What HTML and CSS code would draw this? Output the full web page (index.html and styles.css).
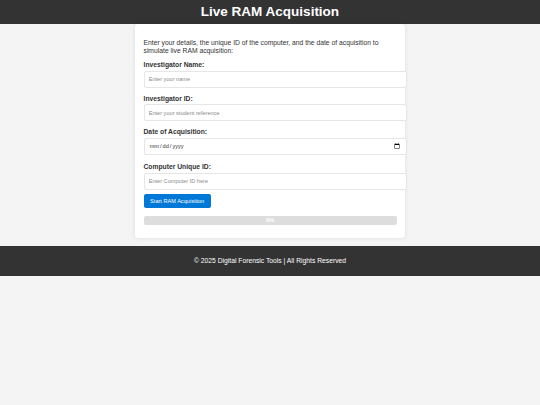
FILE: index.html
```html
<!DOCTYPE html>
<html lang="en">
<head>
<meta charset="utf-8">
<title>Live RAM Acquisition</title>
<link rel="stylesheet" href="styles.css">
</head>
<body>
<header class="site-header">
  <h1 class="site-title">Live RAM Acquisition</h1>
</header>
<main class="container">
  <p class="intro">Enter your details, the unique ID of the computer, and the date of acquisition to simulate live RAM acquisition:</p>
  <form class="form">
    <label class="field-label" for="name">Investigator Name:</label>
    <input class="field-input" type="text" id="name" placeholder="Enter your name">
    <label class="field-label" for="sid">Investigator ID:</label>
    <input class="field-input" type="text" id="sid" placeholder="Enter your student reference">
    <label class="field-label" for="date">Date of Acquisition:</label>
    <input class="field-input field-date" type="date" id="date">
    <label class="field-label" for="cid">Computer Unique ID:</label>
    <input class="field-input" type="text" id="cid" placeholder="Enter Computer ID here">
    <button class="start-btn" type="button">Start RAM Acquisition</button>
  </form>
  <div class="progress">
    <div class="progress-bar" style="width: 0%"></div>
    <span class="progress-label">0%</span>
  </div>
</main>
<footer class="site-footer">
  <p class="footer-text">&copy; 2025 Digital Forensic Tools | All Rights Reserved</p>
</footer>
</body>
</html>
```

FILE: styles.css
```css
html, body {
  margin: 0;
  padding: 0;
}
body {
  background: #f4f4f4;
  font-family: "Liberation Sans", Arial, sans-serif;
  font-size: 6.75px;
  color: #333;
}
.site-header {
  background: #333;
  color: #fff;
  padding: 4.2px 0;
  text-align: center;
}
.site-title {
  margin: 0;
  font-size: 13.5px;
  line-height: 15.6px;
  font-weight: bold;
}
.container {
  max-width: 253px;
  margin: 0 auto;
  padding: 8.4px;
  background: #fff;
  border-radius: 3.4px;
  box-shadow: 0 0 4px rgba(0, 0, 0, 0.1);
}
.intro {
  margin: 6.75px 0;
  line-height: 7.76px;
}
.form {
  display: block;
}
.field-label {
  display: block;
  font-weight: bold;
  line-height: 7.76px;
  margin-bottom: 1.8px;
}
.field-input {
  display: block;
  width: 100%;
  box-sizing: content-box;
  padding: 4.2px;
  margin: 0 0 7px 0;
  border: 1px solid #e6e6e6;
  border-radius: 2px;
  font-family: "Liberation Sans", Arial, sans-serif;
  font-size: 5.6px;
  line-height: 6.5px;
  height: 6.5px;
  color: #333;
  background: #fff;
}
.field-input::placeholder {
  color: #8a8a8a;
}
.field-date {
  height: 6.5px;
  margin-bottom: 8.5px;
}
.start-btn {
  display: inline-block;
  margin-top: -3px;
  padding: 4.2px 6.6px;
  border: 0;
  border-radius: 2px;
  background: #0078d7;
  color: #fff;
  font-family: "Liberation Sans", Arial, sans-serif;
  font-size: 5.6px;
  line-height: 6.4px;
}
.progress {
  display: grid;
  margin-top: 8px;
  margin-bottom: 4.6px;
  height: 8.2px;
  background: #ddd;
  border-radius: 2.1px;
  overflow: hidden;
}
.progress-bar {
  grid-area: 1 / 1;
  height: 100%;
  background: #4caf50;
}
.progress-label {
  grid-area: 1 / 1;
  text-align: center;
  color: #fff;
  font-size: 5.6px;
  line-height: 8.2px;
  font-weight: bold;
}
.site-footer {
  margin-top: 8.4px;
  background: #333;
  color: #fff;
  padding: 4.2px 0;
  text-align: center;
}
.footer-text {
  margin: 6.75px 0;
  line-height: 7.76px;
}
```
